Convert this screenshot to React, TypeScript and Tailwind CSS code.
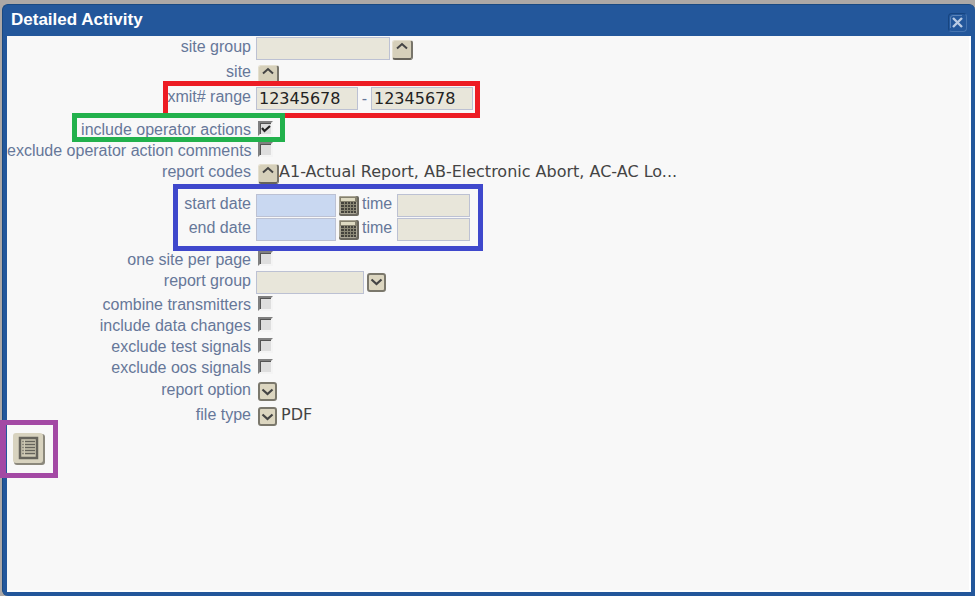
import React from "react";

const fieldBase =
  "h-[23px] border border-[#bcc1d3] px-[2px] font-['DejaVu_Sans',sans-serif] text-base text-[#222] outline-none";

const Row = ({
  label,
  htmlFor,
  size = "h-[25px]",
  children,
}: {
  label: string;
  htmlFor: string;
  size?: string;
  children: React.ReactNode;
}): JSX.Element => (
  <div className={`flex items-start ${size}`}>
    <label htmlFor={htmlFor} className="w-[244px] shrink-0 whitespace-nowrap text-right leading-[21px]">
      {label}
    </label>
    <div className="flex h-full min-w-0 items-center pl-[5px]">{children}</div>
  </div>
);

const Field = ({
  id,
  width,
  label,
  tone = "bg-[#e8e6da]",
  value,
}: {
  id: string;
  width: string;
  label?: string;
  tone?: string;
  value?: string;
}): JSX.Element => (
  <input id={id} type="text" aria-label={label} defaultValue={value} className={`${fieldBase} ${width} ${tone}`} />
);

const UpButton = ({ id, label }: { id?: string; label: string }): JSX.Element => (
  <button
    id={id}
    type="button"
    aria-label={label}
    className="flex h-5 w-[21px] shrink-0 justify-center rounded-[3px] border-r-2 border-b-2 border-l border-t border-t-[#e4dfce] border-l-[#e4dfce] border-r-[#77746a] border-b-[#66635a] bg-[#d6d0ba]"
  >
    <svg width="14" height="12" viewBox="0 0 14 12" fill="none" stroke="#444" strokeWidth="2">
      <path d="M2 7.500 7 3l5 4.500" />
    </svg>
  </button>
);

const DownButton = ({ id, label }: { id?: string; label: string }): JSX.Element => (
  <button
    id={id}
    type="button"
    aria-label={label}
    className="flex h-[19px] w-[19px] shrink-0 items-center justify-center rounded-[3px] border-2 border-[#7b786c] bg-[#dcd6c0]"
  >
    <svg width="13" height="10" viewBox="0 0 13 10" fill="none" stroke="#444" strokeWidth="2.200">
      <path d="M1.500 2.500l5 4.500 5-4.500" />
    </svg>
  </button>
);

const CheckBox = ({ id, checked = false }: { id: string; checked?: boolean }): JSX.Element => (
  <span className="relative ml-[2px] -mt-[2px] flex">
    <input
      id={id}
      type="checkbox"
      defaultChecked={checked}
      className="peer h-[15px] w-[15px] appearance-none border-2 border-t-[#808080] border-l-[#808080] border-r-[#f4f4f4] border-b-[#f4f4f4] bg-[#dedede] shadow-[inset_1px_1px_0_#555]"
    />
    <svg
      className="pointer-events-none absolute inset-0 hidden peer-checked:block"
      width="15"
      height="15"
      viewBox="0 0 15 15"
      fill="none"
      stroke="#222"
      strokeWidth="2.200"
    >
      <path d="M4 7l2.500 3L12 5" />
    </svg>
  </span>
);

const CalendarButton = ({ label }: { label: string }): JSX.Element => (
  <button type="button" aria-label={label} className="mt-[2px] ml-[3px] h-5 w-5 shrink-0">
    <svg width="20" height="20" viewBox="0 0 20 20">
      <rect x="0" y="0" width="20" height="20" rx="2" fill="#6b685f" />
      <rect x="0" y="0" width="18" height="18" rx="2" fill="#aaa696" />
      <rect x="1" y="1" width="17" height="5" fill="#85816f" />
      <rect x="2" y="2" width="14" height="3" fill="#dedac2" />
      <rect x="2" y="6" width="15" height="11" fill="#45433d" />
      <path
        d="M2 8.500h15M2 11.500h15M2 14.500h15M5.500 6v11M8.500 6v11M11.500 6v11M14.500 6v11"
        stroke="#8b8876"
        strokeWidth="1"
      />
    </svg>
  </button>
);

const DateRow = ({ name, label }: { name: string; label: string }): JSX.Element => (
  <Row label={label} htmlFor={`${name}-date`} size="h-6">
    <Field id={`${name}-date`} width="w-20" tone="bg-[#c9d8f1]" />
    <CalendarButton label={`Pick ${label}`} />
    <label htmlFor={`${name}-time`} className="w-[38px] self-start pl-[3px] leading-[21px]">
      time
    </label>
    <Field id={`${name}-time`} width="w-[73px]" />
  </Row>
);

// Coloured outlines drawn over the form
const Highlights = (): JSX.Element => (
  <div aria-hidden="true" className="pointer-events-none">
    <div className="absolute top-[45px] left-[156px] h-[37px] w-[317px] border-[5px] border-[#ed1c24]" />
    <div className="absolute top-[77px] left-[65px] h-[29px] w-[213px] border-[5px] border-[#22b14c]" />
    <div className="absolute top-[148px] left-[166px] h-[67px] w-[310px] border-[5px] border-[#3f48cc]" />
    <div className="absolute top-[384px] -left-[7px] h-[58px] w-[58px] border-[5px] border-l-[6px] border-[#a349a4]" />
  </div>
);

export default function App(): JSX.Element {
  return (
    <div className="flex min-h-screen overflow-hidden bg-[#aca8a6] pt-1 pl-[2px] font-['Liberation_Sans',Arial,sans-serif] text-base text-[#667799]">
      <section className="flex grow flex-col rounded-t-md rounded-bl-md border border-r-0 border-b-0 border-[#194982] bg-[#23579b] pr-1 pb-1 pl-1">
        <header className="flex h-[31px] items-center justify-between pl-1">
          <h1 className="pb-[2px] text-[17px] font-bold text-white">Detailed Activity</h1>
          <button
            type="button"
            aria-label="Close"
            className="mt-1 mr-1 flex h-[19px] w-[19px] items-center justify-center rounded border border-[#174580] border-r-[#4674af] border-b-[#4674af]"
          >
            <svg width="15" height="15" viewBox="0 0 15 15" fill="none">
              <path d="M.5 13V3Q.5.500 3 .5h9" stroke="#5a83b8" />
              <path d="M3 3l9 9M12 3l-9 9" stroke="#b9cbe4" strokeWidth="2.400" />
            </svg>
          </button>
        </header>

        <main className="relative grow border-r-2 border-b-2 border-white bg-[#f8f8f8]">
          <form>
            <Row label="site group" htmlFor="site-group">
              <Field id="site-group" width="w-[134px]" />
              <span className="ml-[2px] flex pt-[2px]">
                <UpButton label="Choose site group" />
              </span>
            </Row>
            <Row label="site" htmlFor="site">
              <span className="ml-[2px] flex pt-[2px]">
                <UpButton id="site" label="Choose site" />
              </span>
            </Row>
            <Row label="xmit# range" htmlFor="xmit-from">
              <Field id="xmit-from" width="w-[102px]" value="12345678" />
              <span className="w-[13px] text-center">-</span>
              <Field id="xmit-to" width="w-[102px]" label="xmit# range end" value="12345678" />
            </Row>

            <div className="pt-2">
              <Row label="include operator actions" htmlFor="include-actions" size="h-[21px]">
                <CheckBox id="include-actions" checked />
              </Row>
              <Row label="exclude operator action comments" htmlFor="exclude-comments" size="h-[21px]">
                <CheckBox id="exclude-comments" />
              </Row>
              <Row label="report codes" htmlFor="report-codes">
                <span className="ml-[2px] flex">
                  <UpButton id="report-codes" label="Choose report codes" />
                </span>
                <span className="self-start truncate font-['DejaVu_Sans',sans-serif] leading-[21px] text-[#444]">
                  A1-Actual Report, AB-Electronic Abort, AC-AC Lo...
                </span>
              </Row>
            </div>

            <div className="pt-[7px] pb-2">
              <DateRow name="start" label="start date" />
              <DateRow name="end" label="end date" />
            </div>

            <Row label="one site per page" htmlFor="one-site" size="h-[21px]">
              <CheckBox id="one-site" />
            </Row>
            <Row label="report group" htmlFor="report-group" size="h-6">
              <Field id="report-group" width="w-[108px]" />
              <span className="ml-[3px]">
                <DownButton label="Choose report group" />
              </span>
            </Row>
            <Row label="combine transmitters" htmlFor="combine" size="h-[21px]">
              <CheckBox id="combine" />
            </Row>
            <Row label="include data changes" htmlFor="data-changes" size="h-[21px]">
              <CheckBox id="data-changes" />
            </Row>
            <Row label="exclude test signals" htmlFor="test-signals" size="h-[21px]">
              <CheckBox id="test-signals" />
            </Row>
            <Row label="exclude oos signals" htmlFor="oos-signals" size="h-[21px]">
              <CheckBox id="oos-signals" />
            </Row>
            <div className="pt-px">
              <Row label="report option" htmlFor="report-option">
                <span className="ml-[2px]">
                  <DownButton id="report-option" label="Choose report option" />
                </span>
              </Row>
              <Row label="file type" htmlFor="file-type">
                <span className="ml-[2px]">
                  <DownButton id="file-type" label="Choose file type" />
                </span>
                <span className="self-start pl-1 font-['DejaVu_Sans',sans-serif] leading-[21px] text-[#444]">PDF</span>
              </Row>
            </div>

            <button type="button" aria-label="Run report" className="mt-1 ml-[6px] block">
              <svg width="32" height="32" viewBox="0 0 32 32">
                <rect x="1" y="1" width="31" height="31" rx="3" fill="#8b887c" />
                <rect x="0" y="0" width="30" height="30" rx="3" fill="#d8d3bf" />
                <rect x="7" y="5" width="17" height="20" fill="#cfcab5" stroke="#66645c" strokeWidth="2.500" />
                <path d="M12 8.500h10M12 11.500h10M12 14.500h10M12 17.500h10M12 20.500h10" stroke="#66645c" strokeWidth="1.500" />
                <path d="M9 8.500h2M9 11.500h2M9 14.500h2M9 17.500h2M9 20.500h2" stroke="#8b887c" strokeWidth="1.500" />
              </svg>
            </button>
          </form>
          <Highlights />
        </main>
      </section>
    </div>
  );
}
